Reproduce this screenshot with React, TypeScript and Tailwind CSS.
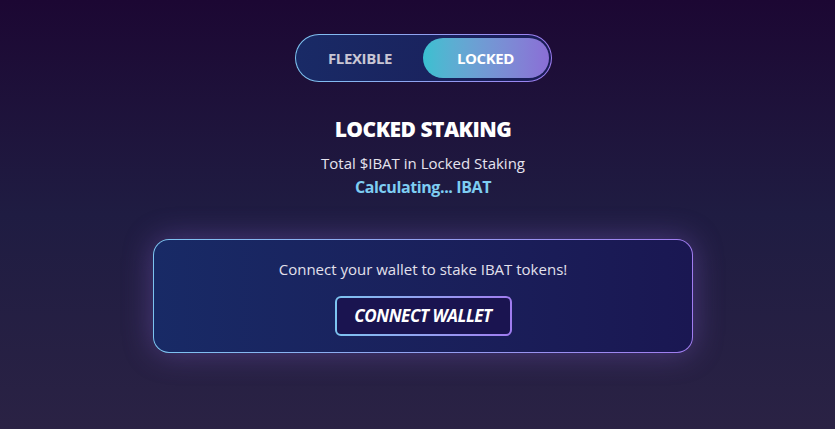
export default function App() {
  return (
    <div
      className="min-h-[429px] w-full bg-gradient-to-b from-[#1c0733] via-[#1f1c42] to-[#2a2244] flex flex-col items-center pt-[34px] pl-[11px] text-white"
      style={{ fontFamily: '"Open Sans", "Noto Sans", sans-serif' }}
    >
      {/* toggle */}
      <div className="rounded-full p-px bg-gradient-to-r from-[#7cc4f0] to-[#9c7cf0]">
        <div className="flex items-center h-[46px] w-[255px] rounded-full bg-gradient-to-r from-[#192a66] to-[#1a1d58] px-[2px]">
          <button className="flex-1 h-[40px] text-[15px] font-bold text-[#c9c6d4] tracking-tight">
            FLEXIBLE
          </button>
          <button className="w-[126px] h-[40px] rounded-full bg-gradient-to-r from-[#38c0d0] to-[#8a6ed6] text-[15px] font-bold tracking-tight">
            LOCKED
          </button>
        </div>
      </div>

      <h2 className="mt-[34px] text-[21px] font-extrabold tracking-tight leading-[27px]">LOCKED STAKING</h2>
      <p className="mt-[10px] text-[15px] leading-[20px] text-[#e6e4ee]">Total $IBAT in Locked Staking</p>
      <p className="mt-[4px] text-[16px] leading-[20px] font-bold text-[#7ecdf2] tracking-tight">Calculating... IBAT</p>

      {/* wallet card */}
      <div className="mt-[42px] rounded-2xl p-px bg-gradient-to-r from-[#7cc4f0] to-[#a07cf0] shadow-[0_0_30px_rgba(150,110,230,0.35)]">
        <div className="w-[538px] h-[112px] rounded-[15px] bg-gradient-to-r from-[#182a66] to-[#1a1752] flex flex-col items-center pt-[19px]">
          <p className="text-[15px] leading-[20px] text-[#e2e0ec]">Connect your wallet to stake IBAT tokens!</p>
          <div className="mt-[17px] rounded-md p-[2px] bg-gradient-to-r from-[#7cc4f0] to-[#a07cf0]">
            <button className="w-[173px] h-[36px] rounded-[4px] bg-[#1a1450] text-[17px] font-bold italic tracking-tight">
              CONNECT WALLET
            </button>
          </div>
        </div>
      </div>
    </div>
  );
}
